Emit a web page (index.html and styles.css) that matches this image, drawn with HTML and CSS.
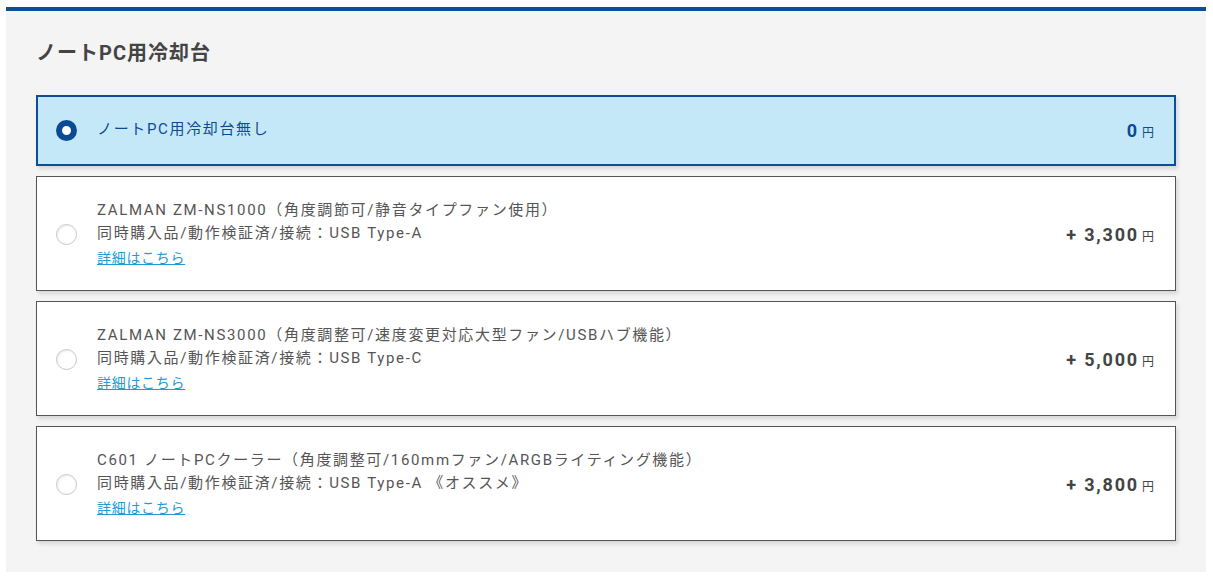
FILE: index.html
```html
<!DOCTYPE html>
<html lang="ja">
<head>
<meta charset="utf-8">
<title>ノートPC用冷却台</title>
<link rel="stylesheet" href="styles.css">
</head>
<body>
  <section class="option-panel">
    <h2 class="option-title">ノートPC用冷却台</h2>
    <ul class="option-list">
      <li class="option selected">
        <span class="radio"></span>
        <div class="option-body">
          <p class="option-name">ノートPC用冷却台無し</p>
        </div>
        <div class="price">0<span class="yen">円</span></div>
      </li>
      <li class="option">
        <span class="radio"></span>
        <div class="option-body">
          <p class="option-name">ZALMAN ZM-NS1000（角度調節可/静音タイプファン使用）</p>
          <p class="option-name">同時購入品/動作検証済/接続：USB Type-A</p>
          <a class="detail" href="#">詳細はこちら</a>
        </div>
        <div class="price">+ 3,300<span class="yen">円</span></div>
      </li>
      <li class="option">
        <span class="radio"></span>
        <div class="option-body">
          <p class="option-name">ZALMAN ZM-NS3000（角度調整可/速度変更対応大型ファン/USBハブ機能）</p>
          <p class="option-name">同時購入品/動作検証済/接続：USB Type-C</p>
          <a class="detail" href="#">詳細はこちら</a>
        </div>
        <div class="price">+ 5,000<span class="yen">円</span></div>
      </li>
      <li class="option">
        <span class="radio"></span>
        <div class="option-body">
          <p class="option-name">C601 ノートPCクーラー（角度調整可/160mmファン/ARGBライティング機能）</p>
          <p class="option-name">同時購入品/動作検証済/接続：USB Type-A 《オススメ》</p>
          <a class="detail" href="#">詳細はこちら</a>
        </div>
        <div class="price">+ 3,800<span class="yen">円</span></div>
      </li>
    </ul>
  </section>
</body>
</html>
```

FILE: styles.css
```css
* {
  margin: 0;
  padding: 0;
  box-sizing: border-box;
}

body {
  background: #fff;
  padding: 7px 7px 6px 6px;
  font-family: Roboto, "Noto Sans CJK JP", sans-serif;
  color: #555;
}

.option-panel {
  background: #f4f4f4;
  border-top: 4px solid #0b4f96;
  padding: 27px 30px 30px 30px;
  height: 565px;
}

.option-title {
  font-size: 20px;
  font-weight: bold;
  color: #444;
  line-height: 30px;
  margin-bottom: 27px;
  letter-spacing: 0.05em;
}

.option-list {
  list-style: none;
  display: flex;
  flex-direction: column;
  gap: 10px;
}

.option {
  display: flex;
  align-items: center;
  background: #fff;
  border: 1px solid #555;
  box-shadow: 2px 3px 4px rgba(0, 0, 0, 0.12);
  padding: 21px 21px 20px 19px;
  min-height: 115px;
}

.option.selected {
  background: #c5e8f9;
  border: 2px solid #0b4f96;
  min-height: 71px;
  padding: 20px 20px 21px 18px;
}

.radio {
  width: 21px;
  height: 21px;
  border-radius: 50%;
  border: 1px solid #c8c8c8;
  background: #fff;
  box-shadow: inset 1px 1px 2px rgba(0, 0, 0, 0.08);
  flex: none;
  margin-right: 20px;
}

.selected .radio {
  border: 6px solid #0b4b93;
  box-shadow: none;
}

.option-body {
  flex: 1;
}

.option-name {
  font-size: 15px;
  line-height: 23.5px;
  letter-spacing: 0.11em;
}

.selected .option-name {
  color: #0b4b93;
}

.detail {
  display: inline-block;
  font-size: 14px;
  line-height: 24px;
  color: #1e9ad6;
  letter-spacing: 0.05em;
  text-decoration: underline;
}

.price {
  font-size: 18px;
  font-weight: bold;
  color: #444;
  letter-spacing: 0.1em;
  white-space: nowrap;
}

.selected .price {
  color: #0b4b93;
}

.yen {
  font-size: 12px;
  font-weight: normal;
  margin-left: 3px;
  letter-spacing: 0;
}
```
